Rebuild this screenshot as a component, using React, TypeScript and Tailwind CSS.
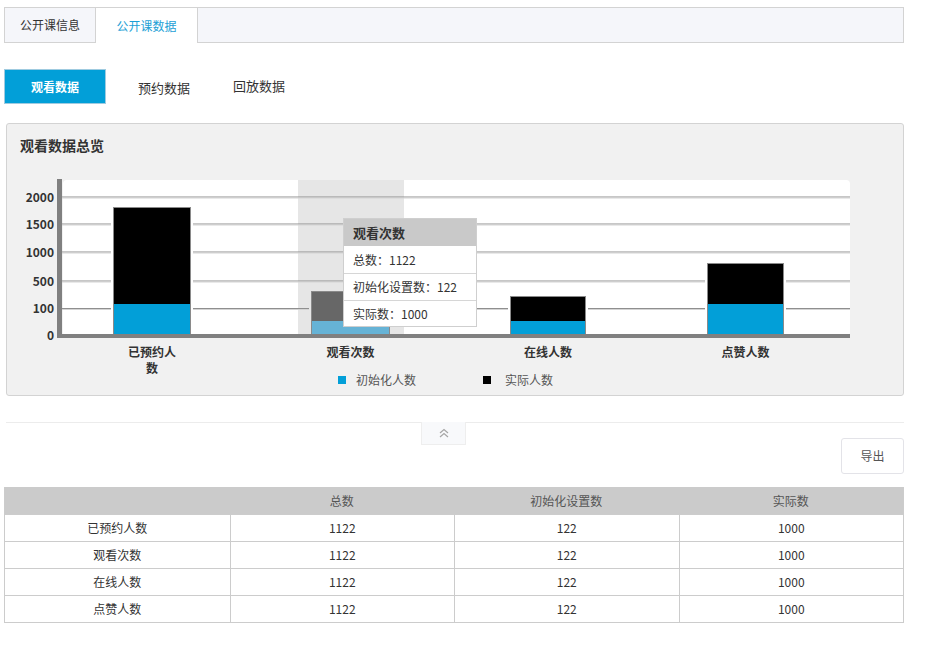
import React from 'react';

const BLUE = '#029fd8';

type Bar = { label: string[]; cx: number; x1: number; x2: number; top: number; split: number; dark?: boolean };

const bars: Bar[] = [
  { label: ['已预约人', '数'], cx: 152, x1: 113, x2: 191, top: 207, split: 304 },
  { label: ['观看次数'], cx: 350.5, x1: 311, x2: 390, top: 291, split: 321, dark: true },
  { label: ['在线人数'], cx: 548, x1: 510, x2: 586, top: 296, split: 321 },
  { label: ['点赞人数'], cx: 745.5, x1: 707, x2: 784, top: 263, split: 304 },
];

const grid = [
  { v: '2000', y: 197 },
  { v: '1500', y: 224 },
  { v: '1000', y: 252 },
  { v: '500', y: 281 },
  { v: '100', y: 308.5 },
];

const rows = ['已预约人数', '观看次数', '在线人数', '点赞人数'];

const Chart: React.FC = () => {
  const base = 334;
  return (
    <svg width={896} height={225} viewBox="7 170 896 225" className="block" fontFamily="Noto Sans CJK SC, sans-serif">
      <rect x={63} y={180} width={787} height={156} rx={4} fill="#fff" />
      <rect x={298} y={180} width={106} height={155} fill="#e6e6e6" />
      {grid.map((g) => (
        <g key={g.v}>
          <line x1={62} x2={850} y1={g.y} y2={g.y} stroke="#8f8f8f" strokeWidth={1} />
          <line x1={62} x2={850} y1={g.y + 1} y2={g.y + 1} stroke="#d4d4d4" strokeWidth={1} />
          <text x={54} y={g.y + 4.5} textAnchor="end" fontSize={12} fontWeight={700} fill="#333">
            {g.v}
          </text>
        </g>
      ))}
      <text x={54} y={340} textAnchor="end" fontSize={12} fontWeight={700} fill="#333">
        0
      </text>
      {bars.map((b) => (
        <g key={b.cx}>
          <rect x={b.x1 - 2} y={b.top - 2} width={b.x2 - b.x1 + 4} height={base - b.top + 2} fill={b.dark ? '#e6e6e6' : '#fff'} />
          <rect x={b.x1} y={b.top} width={b.x2 - b.x1} height={b.split - b.top} fill={b.dark ? '#676767' : '#000'} />
          <rect x={b.x1} y={b.split} width={b.x2 - b.x1} height={base - b.split} fill={b.dark ? '#66b3d6' : BLUE} />
          <rect x={b.x1 + 0.5} y={b.top + 0.5} width={b.x2 - b.x1 - 1} height={base - b.top} fill="none" stroke="#8a8a8a" strokeWidth={1} />
          {b.label.map((l, i) => (
            <text key={l} x={b.cx} y={357 + i * 16} textAnchor="middle" fontSize={12} fontWeight={700} fill="#333">
              {l}
            </text>
          ))}
        </g>
      ))}
      <rect x={57} y={179} width={5} height={159} fill="#808080" />
      <rect x={57} y={334} width={793} height={4} fill="#808080" />
      <rect x={338} y={376} width={8} height={8} fill={BLUE} />
      <text x={356} y={385} fontSize={12} fill="#555">初始化人数</text>
      <rect x={483} y={376} width={8} height={8} fill="#000" />
      <text x={505} y={385} fontSize={12} fill="#555">实际人数</text>
    </svg>
  );
};

const App: React.FC = () => {
  return (
    <div className="min-h-[663px] w-[940px] bg-white pt-[7px] text-[12px] text-[#333] font-['Noto_Sans_CJK_SC',sans-serif]">
      {/* top tabs */}
      <div className="ml-[4px] flex h-[36px] w-[900px] border-x border-t border-[#d3d3d3] bg-[#f5f6fa]">
        <div className="flex h-[35px] w-[91px] items-center justify-center border-r border-b border-[#d3d3d3] leading-5">
          公开课信息
        </div>
        <div className="flex h-[35px] w-[102px] items-center justify-center border-r border-[#d3d3d3] bg-white leading-5 text-[#1d9fd6]">
          公开课数据
        </div>
        <div className="h-[35px] flex-1 border-b border-[#d3d3d3]" />
      </div>

      {/* sub tabs */}
      <div className="ml-[4px] mt-[26px] flex items-start">
        <div className="flex h-[35px] w-[102px] items-center justify-center border border-[#9fcbe0] bg-[#029fd8] font-bold leading-5 text-white">
          观看数据
        </div>
        <span className="ml-[32px] mt-[9px] text-[13px] leading-5">预约数据</span>
        <span className="ml-[43px] mt-[7px] text-[13px] leading-5">回放数据</span>
      </div>

      {/* chart panel */}
      <div className="relative ml-[6px] mt-[19px] h-[273px] w-[898px] rounded-[3px] border border-[#d3d3d3] bg-[#f1f1f1]">
        <div className="pl-[13px] pt-[11px] text-[14px] font-bold leading-5 text-[#333]">观看数据总览</div>
        <div className="mt-[15px]">
          <Chart />
        </div>
        <div className="absolute left-[336px] top-[94px] w-[134px] border border-[#cfcfcf] bg-white text-[12px] text-[#333]">
          <div className="flex h-[27px] items-center bg-[#c9c9c9] pl-[9px] text-[13px] font-bold">观看次数</div>
          <div className="flex h-[27px] items-center pl-[9px]">总数：1122</div>
          <div className="flex h-[27px] items-center border-t border-[#d6d6d6] pl-[9px]">初始化设置数：122</div>
          <div className="flex h-[26px] items-center border-t border-[#d6d6d6] pl-[9px]">实际数：1000</div>
        </div>
      </div>

      {/* collapse divider */}
      <div className="relative ml-[6px] mt-[26px] w-[898px] border-t border-[#ececec]">
        <div className="absolute left-[415px] top-[-1px] flex h-[23px] w-[45px] items-center justify-center border-x border-b border-[#eeeeee] bg-[#f8f9fb]">
          <svg width="10" height="10" viewBox="0 0 10 10" fill="none" stroke="#a6a6a6" strokeWidth="1.2">
            <polyline points="1,5 5,1.5 9,5" />
            <polyline points="1,9 5,5.5 9,9" />
          </svg>
        </div>
      </div>

      {/* export */}
      <div className="ml-[4px] mt-[15px] flex w-[900px] justify-end">
        <button className="flex h-[36px] w-[63px] items-center justify-center rounded-[3px] border border-[#e3e3e8] bg-white text-[12px] leading-5 text-[#555]">
          导出
        </button>
      </div>

      {/* table */}
      <div className="ml-[4px] mt-[13px] w-[900px] border-x border-b border-[#cccccc]">
        <div className="grid h-[27px] grid-cols-4 items-center bg-[#cbcbcb] text-center leading-5 text-[#555]">
          <div />
          <div>总数</div>
          <div>初始化设置数</div>
          <div>实际数</div>
        </div>
        {rows.map((r) => (
          <div key={r} className="grid h-[27px] grid-cols-4 border-t border-[#cccccc] text-center leading-5">
            <div className="flex items-center justify-center">{r}</div>
            <div className="flex items-center justify-center border-l border-[#cccccc]">1122</div>
            <div className="flex items-center justify-center border-l border-[#cccccc]">122</div>
            <div className="flex items-center justify-center border-l border-[#cccccc]">1000</div>
          </div>
        ))}
      </div>
    </div>
  );
};

export default App;
